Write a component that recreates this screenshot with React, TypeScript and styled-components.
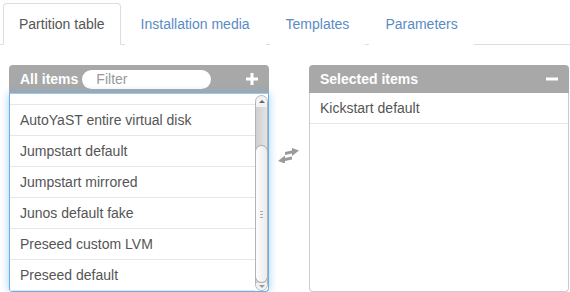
import { useEffect, useRef } from "react";
import styled, { createGlobalStyle } from "styled-components";

const GlobalStyle = createGlobalStyle`
  html, body {
    margin: 0;
    padding: 0;
    background: #fff;
    font-family: "Liberation Sans", Arial, sans-serif;
    font-size: 14px;
    color: #555;
  }
  * { box-sizing: border-box; }
`;

const tabs = ["Partition table", "Installation media", "Templates", "Parameters"];

const allItems = [
  "AutoYaST LVM",
  "AutoYaST entire SCSI disk",
  "AutoYaST entire virtual disk",
  "Jumpstart default",
  "Jumpstart mirrored",
  "Junos default fake",
  "Preseed custom LVM",
  "Preseed default",
];

const selectedItems = ["Kickstart default"];

const TransferIcon = () => (
  <svg width="22" height="15" viewBox="0 0 22 15">
    <g fill="#9a9a9a" transform="skewY(-12) translate(0 3)">
      <rect x="7" y="2.5" width="8" height="3" />
      <polygon points="14,0 21,4 14,8" />
      <rect x="6" y="8.5" width="8" height="3" />
      <polygon points="7,6 0,10 7,14" />
    </g>
  </svg>
);

const App = () => {
  const viewRef = useRef<HTMLDivElement>(null);

  useEffect(() => {
    if (viewRef.current) viewRef.current.scrollTop = 9999;
  }, []);

  return (
    <Page>
      <GlobalStyle />
      <TabBar>
        {tabs.map((t, i) => (
          <Tab key={t} $active={i === 0}>{t}</Tab>
        ))}
      </TabBar>

      <Body>
        <Panel>
          <PanelHeader>
            <HeaderTitle>All items</HeaderTitle>
            <FilterInput placeholder="Filter" />
            <HeaderSpacer />
            <svg width="12" height="12" viewBox="0 0 12 12">
              <rect x="4.5" y="0" width="3" height="12" fill="#fff" />
              <rect x="0" y="4.5" width="12" height="3" fill="#fff" />
            </svg>
          </PanelHeader>
          <ListBox $focused>
            <Viewport ref={viewRef}>
              {allItems.map(item => (
                <Item key={item}>{item}</Item>
              ))}
            </Viewport>
            <ScrollBar>
              <ArrowCap $h={11}>
                <Arrow $up />
              </ArrowCap>
              <TrackGap />
              <Thumb>
                <Grip />
              </Thumb>
              <ArrowCap $h={7}>
                <Arrow />
              </ArrowCap>
            </ScrollBar>
          </ListBox>
        </Panel>

        <Middle>
          <TransferIcon />
        </Middle>

        <Panel>
          <PanelHeader>
            <HeaderTitle>Selected items</HeaderTitle>
            <HeaderSpacer />
            <svg width="12" height="12" viewBox="0 0 12 12">
              <rect x="0" y="4.5" width="12" height="3" fill="#fff" />
            </svg>
          </PanelHeader>
          <ListBox>
            <Viewport>
              {selectedItems.map(item => (
                <Item key={item}>{item}</Item>
              ))}
            </Viewport>
          </ListBox>
        </Panel>
      </Body>
    </Page>
  );
};

const Page = styled.div`
  width: 570px;
  height: 292px;
  overflow: hidden;
  padding-top: 3px;
`;

const TabBar = styled.div`
  display: flex;
  padding-left: 3px;
  border-bottom: 1px solid #ddd;
`;

const Tab = styled.div<{ $active?: boolean }>`
  padding: 10px 15px;
  line-height: 20px;
  margin-right: 4px;
  margin-bottom: -1px;
  border: 1px solid ${({ $active }) => ($active ? "#ddd" : "transparent")};
  border-bottom-color: ${({ $active }) => ($active ? "#fff" : "transparent")};
  border-radius: 4px 4px 0 0;
  background: #fff;
  color: ${({ $active }) => ($active ? "#555" : "#5a8bc4")};
  cursor: pointer;
`;

const Body = styled.div`
  display: flex;
  padding: 20px 0 0 9px;
`;

const Panel = styled.div`
  width: 260px;
  display: flex;
  flex-direction: column;
`;

const PanelHeader = styled.div`
  height: 28px;
  background: #a8a8a8;
  border-radius: 4px 4px 0 0;
  display: flex;
  align-items: center;
  padding: 0 11px 0 11px;
  color: #fff;
  font-weight: bold;
`;

const HeaderTitle = styled.span`
  line-height: 20px;
`;

const HeaderSpacer = styled.span`
  flex: 1;
`;

const FilterInput = styled.input`
  margin-left: 4px;
  width: 129px;
  height: 19px;
  border: none;
  border-radius: 10px;
  padding: 0 14px;
  font-family: "Liberation Sans", Arial, sans-serif;
  font-size: 14px;
  color: #555;
  outline: none;
  &::placeholder {
    color: #999;
  }
`;

const ListBox = styled.div<{ $focused?: boolean }>`
  height: 199px;
  display: flex;
  border: 1px solid ${({ $focused }) => ($focused ? "#66afe9" : "#ccc")};
  border-top: ${({ $focused }) => ($focused ? "1px solid #9cc8ec" : "none")};
  border-radius: 0 0 4px 4px;
  box-shadow: ${({ $focused }) =>
    $focused ? "0 0 8px rgba(102, 175, 233, 0.6)" : "none"};
  background: #fff;
`;

const Viewport = styled.div`
  flex: 1;
  overflow: hidden;
`;

const ScrollBar = styled.div`
  width: 13px;
  margin: 1px 0 0 0;
  border: 1px solid #b4b4b4;
  border-radius: 7px;
  background: linear-gradient(to right, #cfcfcf, #e3e3e3);
  display: flex;
  flex-direction: column;
  overflow: hidden;
`;

const ArrowCap = styled.div<{ $h: number }>`
  height: ${({ $h }) => $h}px;
  flex-shrink: 0;
  display: flex;
  align-items: center;
  justify-content: center;
  background: #f2f2f2;
`;

const Arrow = styled.span<{ $up?: boolean }>`
  width: 0;
  height: 0;
  border-left: 3px solid transparent;
  border-right: 3px solid transparent;
  ${({ $up }) =>
    $up ? "border-bottom: 3px solid #666;" : "border-top: 3px solid #999;"}
`;

const TrackGap = styled.div`
  flex: 1;
`;

const Thumb = styled.div`
  height: 138px;
  flex-shrink: 0;
  margin: 0 -1px;
  border: 1px solid #a9a9a9;
  border-radius: 7px;
  background: linear-gradient(to right, #fdfdfd, #ebebeb);
  display: flex;
  align-items: center;
  justify-content: center;
`;

const Grip = styled.span`
  width: 3px;
  height: 7px;
  background: repeating-linear-gradient(
    to bottom,
    #aaa 0,
    #aaa 1px,
    transparent 1px,
    transparent 3px
  );
`;

const Item = styled.div`
  height: 31px;
  line-height: 30px;
  padding-left: 10px;
  border-bottom: 1px solid #e6e6e6;
  color: #555;
  white-space: nowrap;
`;

const Middle = styled.div`
  width: 40px;
  display: flex;
  justify-content: center;
  align-items: flex-start;
  padding-top: 83px;
`;

export default App;
